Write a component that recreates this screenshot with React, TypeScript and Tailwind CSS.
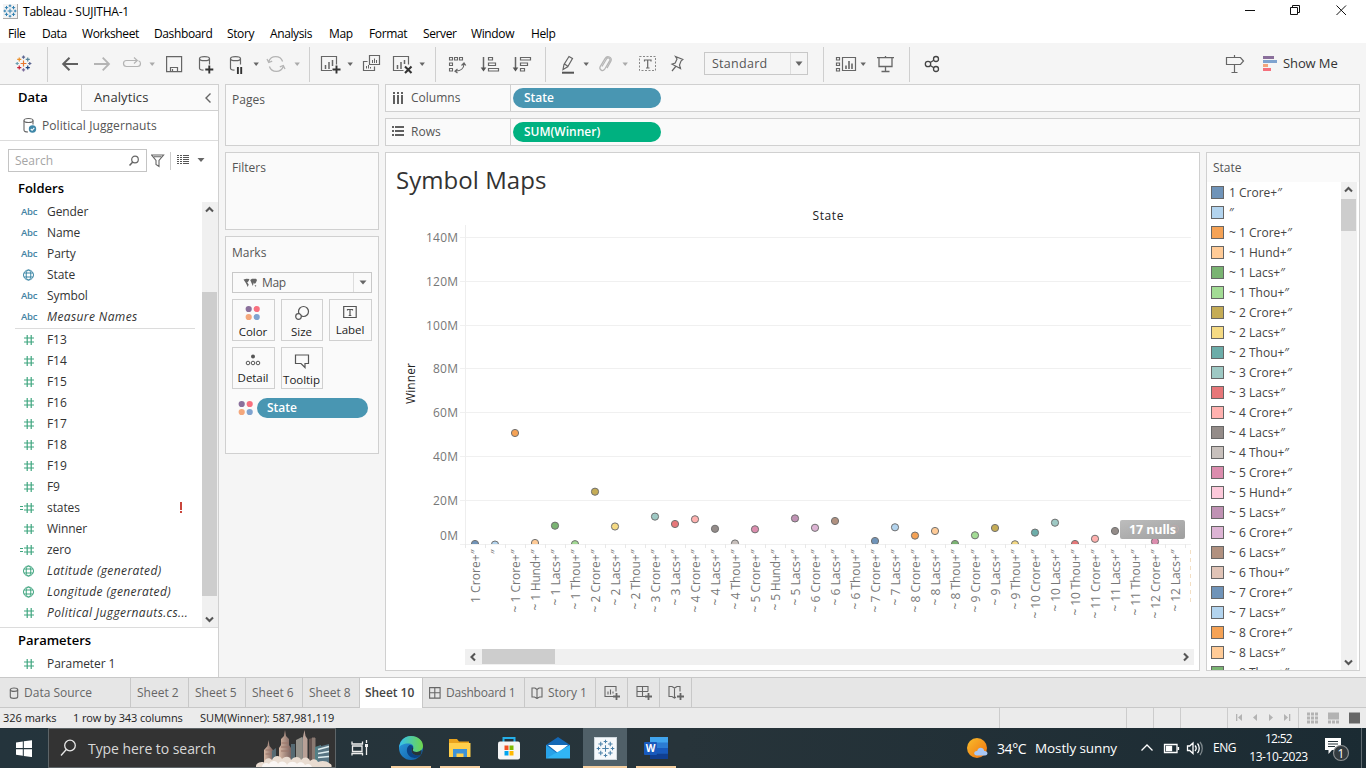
import type { ReactNode } from 'react';

const UI = "font-['Open_Sans','Noto_Sans',sans-serif]";

type IconProps = { x: number; y: number; w?: number; h?: number; className?: string; stroke?: string; sw?: number; children: ReactNode };

function Ic({ x, y, w = 24, h = 24, className = '', stroke = '#666', sw = 1.2, children }: IconProps) {
  return (
    <svg className={`block shrink-0 ${className}`} width={w} height={h} viewBox={`${x} ${y} ${w} ${h}`} fill="none" stroke={stroke} strokeWidth={sw}>
      {children}
    </svg>
  );
}

function Caret({ className = '', fill = '#666' }: { className?: string; fill?: string }) {
  return (
    <svg className={`block shrink-0 ${className}`} width="8" height="24" viewBox="0 0 8 24">
      <path d="M1.500 10.500h5.400l-2.700 3.400z" fill={fill} />
    </svg>
  );
}

function Div({ className = '' }: { className?: string }) {
  return <div className={`-mt-[5px] h-[35px] w-px shrink-0 bg-[#cfcfcf] ${className}`} />;
}

function TableauMark({ size, color, thin }: { size: number; color?: string; thin?: boolean }) {
  const marks: [number, number, number, string][] = [
    [12, 12, 3.4, '#e8762d'],
    [12, 4.6, 1.9, '#5b6591'],
    [12, 19.4, 1.9, '#7b6b9b'],
    [4.6, 12, 1.9, '#6a9fb0'],
    [19.4, 12, 1.9, '#5b6591'],
    [7, 7.2, 2.4, '#eb912c'],
    [17, 7.2, 2.4, '#59879b'],
    [7, 16.8, 2.4, '#c72035'],
    [17, 16.8, 2.4, '#1f447e'],
  ];
  return (
    <svg className="block shrink-0" width={size} height={size} viewBox="2 2 20 20" fill="none" strokeWidth={thin ? 1.1 : 1.4}>
      {marks.map(([x, y, r, c], i) => (
        <path key={i} d={`M${x - r} ${y}h${2 * r}M${x} ${y - r}v${2 * r}`} stroke={color ?? c} />
      ))}
    </svg>
  );
}

function TitleBar() {
  return (
    <div className="flex h-[22px] shrink-0 items-start">
      <div className="ml-[3px] mt-[4px] flex h-[15px] w-[15px] items-center justify-center border-b border-r border-[#aaa] bg-[#f3f3f3]">
        <TableauMark size={14} color="#2f7fb0" />
      </div>
      <div className="ml-[5px] mt-[3px] text-[12px] leading-[18px] tracking-[-0.22px] text-black">Tableau - SUJITHA-1</div>
      <Ic x={1240} y={0} w={116} h={22} stroke="#111" sw={1} className="ml-auto mr-[10px]">
        <path d="M1245 10.500h10" />
        <path d="M1290.500 7.500h7v7h-7zM1292.500 7.500v-2h7v7h-2" />
        <path d="M1336.500 5.500l9.500 9.500M1346 5.500l-9.500 9.500" />
      </Ic>
    </div>
  );
}

function MenuBar() {
  const items: [string, string][] = [
    ['File', 'w-[34px]'],
    ['Data', 'w-[40px]'],
    ['Worksheet', 'w-[72px]'],
    ['Dashboard', 'w-[73px]'],
    ['Story', 'w-[43px]'],
    ['Analysis', 'w-[59px]'],
    ['Map', 'w-[40px]'],
    ['Format', 'w-[54px]'],
    ['Server', 'w-[48px]'],
    ['Window', 'w-[60px]'],
    ['Help', 'w-[40px]'],
  ];
  return (
    <div className="flex h-[21px] shrink-0 pl-[8px] text-[12px] leading-[24px] tracking-[-0.38px] text-black">
      {items.map(([t, w]) => (
        <div key={t} className={`${w} shrink-0 whitespace-nowrap`}>{t}</div>
      ))}
    </div>
  );
}

function Toolbar() {
  return (
    <div className="flex h-[41px] shrink-0 items-start bg-[#f5f5f5] pt-[9px]">
      <div className="ml-[15px] mt-[3px]"><TableauMark size={17} /></div>
      <Div className="ml-[15px]" />
      <Ic x={58} y={52} className="ml-[10px]" sw={2} stroke="#606060"><path d="M78 64H63.500M69.500 57.700L63.200 64l6.300 6.300" /></Ic>
      <Ic x={90} y={52} className="ml-[8px]" sw={1.8} stroke="#b4b4b4"><path d="M94 64h14.500M102.700 57.700L109 64l-6.300 6.300" /></Ic>
      <Ic x={120} y={52} className="ml-[6px]" stroke="#b4b4b4"><path d="M130.500 60.500h-4a3 3 0 0 0-3 3a3 3 0 0 0 3 3h11a3 3 0 0 0 3-3c0-1.400-.800-2.400-2-2.800M130.500 60.500h6M134 57.500l3.300 3l-3.300 3" /></Ic>
      <Caret className="ml-[4px]" fill="#aaa" />
      <Ic x={162} y={52} className="ml-[6px]"><path d="M166.600 56.600h15v15h-15zM170.500 71.500v-4h7v4M172.500 69v2.500" /></Ic>
      <Ic x={194} y={52} className="ml-[8px]">
        <ellipse cx="204.500" cy="58.700" rx="5" ry="2" /><path d="M199.500 58.700v9.500c0 1 1.500 1.800 4 2M209.500 58.700v5.800" />
        <path d="M209.300 65.500v8M205.300 69.500h8" stroke="#333" strokeWidth="1.900" />
      </Ic>
      <Ic x={225} y={52} className="ml-[7px]">
        <ellipse cx="235.500" cy="58.700" rx="5" ry="2" /><path d="M230.500 58.700v9.500c0 1 1.500 1.800 4 2M240.500 58.700v5.800" />
        <path d="M237.900 67v7M241.200 67v7" stroke="#333" strokeWidth="1.900" />
      </Ic>
      <Caret className="ml-[3px]" />
      <Ic x={264} y={52} className="ml-[4px]" stroke="#b4b4b4" sw={1.3}>
        <path d="M268.800 61.500a7.300 7.300 0 0 1 13.800 0M283.200 66.500a7.300 7.300 0 0 1-13.800 0M267 59l1.700 3.500l3.500-1.300M285 69l-1.700-3.500l-3.500 1.300" />
      </Ic>
      <Caret className="ml-[5px]" fill="#aaa" />
      <Div className="ml-[8px]" />
      <Ic x={318} y={52} className="ml-[8px]">
        <path d="M332 70.500h-10.500v-14h15v8" /><path d="M325.500 65v4M329 62v7M332.500 60v6" strokeWidth="1.500" />
        <path d="M336.500 65.500v8M332.500 69.500h8" stroke="#333" strokeWidth="1.900" />
      </Ic>
      <Caret className="ml-[4px]" />
      <Ic x={360} y={52} className="ml-[6px]">
        <path d="M369.500 55.500h10v9h-10zM367.500 61.500h-4v9h11v-4" /><path d="M372.500 60v3M374.500 58.500v4.500M376.500 60v3M366.500 66v2.500M368.500 65v3.500M370.500 67v1.500" strokeWidth="1" />
      </Ic>
      <Ic x={391} y={52} className="ml-[7px]">
        <path d="M403.500 70.500h-10v-14h15v8" /><path d="M397.500 65v4M401 62v7M404.500 60v4" strokeWidth="1.500" />
        <path d="M405 66.500l6.500 6.500M411.500 66.500L405 73" stroke="#333" strokeWidth="2.100" />
      </Ic>
      <Caret className="ml-[3px]" />
      <Div className="ml-[9px]" />
      <Ic x={445} y={52} className="ml-[9px]">
        <path d="M449.500 57.500h3v2.500h-3zM454.500 57.500h3v2.500h-3zM459.500 57.500h3v2.500h-3zM449.500 63h3v2.500h-3zM449.500 68.500h3v2.500h-3z" strokeWidth="1.100" />
        <path d="M464 63.500c0 5-3.500 7.500-8 7.500M461.500 65.500l2.500-2.500l1.800 2.500M457.500 69l-2.500 2.200l2.500 1.800" />
      </Ic>
      <Ic x={478} y={52} className="ml-[9px]">
        <path d="M483.500 57v12" strokeWidth="1.500" /><path d="M480.700 67.500h5.600l-2.800 4z" fill="#555" stroke="none" />
        <path d="M488.500 57.500h4v2.500h-4zM488.500 63h7v2.500h-7zM488.500 68.500h10v2.500h-10z" />
      </Ic>
      <Ic x={510} y={52} className="ml-[8px]">
        <path d="M515.500 57v12" strokeWidth="1.500" /><path d="M512.700 67.500h5.600l-2.800 4z" fill="#555" stroke="none" />
        <path d="M520.500 57.500h10v2.500h-10zM520.500 63h7v2.500h-7zM520.500 68.500h4v2.500h-4z" />
      </Ic>
      <Div className="ml-[11px]" />
      <Ic x={556} y={52} className="ml-[10px]">
        <path d="M563 69.500l1-5l5-8l3.500 2l-4.800 8.200zM564.500 64l3.300 2.200" /><path d="M562 72.700h12" stroke="#555" strokeWidth="2" />
      </Ic>
      <Caret className="ml-[2px]" />
      <Ic x={593} y={52} className="ml-[3px]" stroke="#b4b4b4">
        <path d="M602 66.500l4.500-7.500c1.300-2 4.300-.700 3.200 1.600l-5 8.600c-2 2.800-6 .500-4.500-2.600l4.800-8c2.200-3.500 7.600-1.500 6 2.500l-4 7" />
      </Ic>
      <Caret className="ml-[4px]" fill="#aaa" />
      <Ic x={636} y={52} className="ml-[7px]">
        <path d="M639.500 56.500h16v14h-16z" strokeDasharray="2 1.500" strokeWidth="1" stroke="#888" /><path d="M644.500 61.500v-1.500h6.500v1.500M647.700 60v8M646 68h3.500" />
      </Ic>
      <Ic x={665} y={52} className="ml-[5px]">
        <path d="M675.500 56.500l7.300 3l-1.800 1.500l-1.500 4l1 3.500l-8.500-4.300l3.200-1.200l1.800-4zM675.700 66.500l-3.700 4.500" />
      </Ic>
      <div className="ml-[15px] flex h-[23px] w-[104px] border border-[#c8c8c8] text-[12.5px] leading-[21px] tracking-[0.27px] text-[#555]">
        <div className="w-[86px] border-r border-[#ddd] pl-[7px]">Standard</div>
        <svg className="ml-[4px] mt-[8px] block" width="9" height="6" viewBox="0 0 9 6"><path d="M.500.500h7L4 5z" fill="#666" /></svg>
      </div>
      <Div className="ml-[15px]" />
      <Ic x={834} y={52} className="ml-[10px]">
        <path d="M836.500 57.500h3v2.500h-3zM836.500 63h3v2.500h-3zM836.500 68.500h3v2.500h-3zM842.500 57.500h13v13h-13z" /><path d="M846 65.500v3.500M849 61v8M852 63.500v5.500" strokeWidth="1.600" />
      </Ic>
      <Caret className="ml-[1px]" />
      <Ic x={873} y={52} className="ml-[6px]" sw={1.3}><path d="M877 57.600h17M879 58v8.500h13v-8.500M885.500 67v4.500M881.500 71.500h8M885.500 56v2" /></Ic>
      <Div className="ml-[12px]" />
      <Ic x={920} y={52} className="ml-[10px]" stroke="#444" sw={1.3}>
        <circle cx="928" cy="64" r="2.700" /><circle cx="936" cy="59" r="2.500" /><circle cx="936" cy="69" r="2.500" /><path d="M930.300 62.500l3.500-2.200M930.300 65.500l3.500 2.200" />
      </Ic>
      <Ic x={1223} y={52} className="ml-auto">
        <path d="M1226.500 57.500h14l3 3.500l-3 3.500h-14zM1234.500 55v2.500M1234.500 64.500v7.500M1231.500 72.500h6" />
      </Ic>
      <Ic x={1263} y={52} w={15} className="ml-[16px]" stroke="none">
        <path d="M1263 56h11v3h-11z" fill="#8a6f9b" /><path d="M1263 60h14v3h-14z" fill="#7fa3cf" /><path d="M1263 64h5v3h-5z" fill="#f2a57c" /><path d="M1263 68h8v3h-8z" fill="#f5707c" />
      </Ic>
      <div className="ml-[5px] w-[83px] whitespace-nowrap text-[13px] leading-[22px] tracking-[-0.1px] text-[#333]">Show Me</div>
    </div>
  );
}

function Arrow({ dir }: { dir: 'up' | 'down' | 'left' | 'right' }) {
  const d = {
    up: 'M4 9.500L7.500 6l3.500 3.500',
    down: 'M4 6.500L7.500 10l3.500-3.500',
    left: 'M10 4.500L6.500 8l3.500 3.500',
    right: 'M6 4.500L9.500 8l-3.500 3.500',
  }[dir];
  return <svg className="block shrink-0" width="16" height="16" viewBox="0 0 16 16"><path d={d} fill="none" stroke="#555" strokeWidth="2.100" /></svg>;
}

function Hash({ calc }: { calc?: boolean }) {
  return (
    <svg className="block shrink-0" width="18" height="12" viewBox="0 0 18 12" fill="none" stroke="#3fa57f" strokeWidth="1.200">
      <path d="M4 4h10M4 8h10M7.200 1v10M11.200 1v10" />
      {calc && <path d="M0 4.500h3M0 7.500h3" strokeWidth="1" />}
    </svg>
  );
}

function Globe({ color }: { color: string }) {
  return (
    <svg className="block shrink-0" width="18" height="12" viewBox="0 0 18 12" fill="none" stroke={color} strokeWidth="1">
      <circle cx="8.500" cy="6" r="5" /><ellipse cx="8.500" cy="6" rx="2.300" ry="5" /><path d="M4 4h9M4 8h9" />
    </svg>
  );
}

type Field = { t: string; k: 'abc' | 'hash' | 'calc' | 'gb' | 'gg'; i?: boolean; bad?: boolean };

function FieldRow({ f }: { f: Field }) {
  return (
    <div className="flex h-[21px] shrink-0 items-center pl-[20px]">
      <div className="w-[27px] shrink-0">
        {f.k === 'abc' && <div className="pl-px pt-px text-[9.5px] font-semibold leading-[12px] tracking-[-0.2px] text-[#4383a3]">Abc</div>}
        {f.k === 'hash' && <Hash />}
        {f.k === 'calc' && <Hash calc />}
        {f.k === 'gb' && <Globe color="#3d87a6" />}
        {f.k === 'gg' && <Globe color="#3fa57f" />}
      </div>
      <div className={`w-[142px] whitespace-nowrap pt-px text-[12px] leading-[20px] text-[#333] ${f.i ? 'italic tracking-[0.39px]' : 'tracking-[-0.08px]'}`}>{f.t}</div>
      {f.bad && <div className="-ml-[9px] flex flex-col gap-px"><div className="h-[8px] w-[2px] bg-[#c9453b]" /><div className="h-[2px] w-[2px] bg-[#c9453b]" /></div>}
    </div>
  );
}

const dims: Field[] = [
  { t: 'Gender', k: 'abc' }, { t: 'Name', k: 'abc' }, { t: 'Party', k: 'abc' }, { t: 'State', k: 'gb' }, { t: 'Symbol', k: 'abc' }, { t: 'Measure Names', k: 'abc', i: true },
];
const measures: Field[] = [
  { t: 'F13', k: 'hash' }, { t: 'F14', k: 'hash' }, { t: 'F15', k: 'hash' }, { t: 'F16', k: 'hash' }, { t: 'F17', k: 'hash' }, { t: 'F18', k: 'hash' }, { t: 'F19', k: 'hash' }, { t: 'F9', k: 'hash' },
  { t: 'states', k: 'calc', bad: true }, { t: 'Winner', k: 'hash' }, { t: 'zero', k: 'calc' }, { t: 'Latitude (generated)', k: 'gg', i: true }, { t: 'Longitude (generated)', k: 'gg', i: true }, { t: 'Political Juggernauts.cs...', k: 'hash', i: true },
];

function DataPane() {
  return (
    <div className="flex w-[219px] shrink-0 flex-col border-r border-t border-[#d0d0d0] bg-white">
      <div className="flex h-[26px] shrink-0">
        <div className="w-[81px] pl-[18px] text-[13px] font-semibold leading-[25px] text-black">Data</div>
        <div className="flex flex-1 items-center border-b border-l border-[#d0d0d0] bg-[#fafafa] pl-[12px]">
          <div className="text-[13px] leading-[25px] tracking-[0.1px] text-[#333]">Analytics</div>
          <Ic x={0} y={0} w={10} h={12} className="ml-auto mr-[5px]" sw={1.4}><path d="M7.500 1.500L3 6l4.500 4.500" /></Ic>
        </div>
      </div>
      <div className="flex h-[30px] shrink-0 items-center border-b border-[#dcdcdc] pl-[22px]">
        <Ic x={22} y={117} w={16} h={17} sw={1.1}>
          <ellipse cx="28.500" cy="120.500" rx="4.500" ry="2" /><path d="M24 120.500v9.500c0 1.300 1.800 2 4 2M33 120.500v4" />
          <circle cx="32.500" cy="129" r="3.700" fill="#3f87a8" stroke="none" /><path d="M30.800 129l1.300 1.300l2.200-2.500" stroke="#fff" />
        </Ic>
        <div className="ml-[4px] whitespace-nowrap text-[12px] leading-[20px] tracking-[0.08px] text-[#555]">Political Juggernauts</div>
      </div>
      <div className="mt-[8px] flex h-[23px] shrink-0 items-center pl-[8px]">
        <div className="flex h-[23px] w-[139px] items-center border border-[#c4c4c4] pl-[6px] text-[12px] text-[#a5a5a5]">
          Search
          <Ic x={0} y={0} w={12} h={12} className="ml-auto mr-[6px]" sw={1.2}><circle cx="7" cy="4.500" r="3.300" /><path d="M4.800 7L1.500 10.500" strokeWidth="1.500" /></Ic>
        </div>
        <Ic x={0} y={0} w={14} h={14} className="ml-[4px]" sw={1.1}><path d="M.600 1h12L8 6.500v6l-3-2v-4zM2.800 2.800h7.500" /></Ic>
        <div className="ml-[5px] h-[18px] w-px bg-[#ccc]" />
        <Ic x={0} y={0} w={13} h={12} className="-mt-[3px] ml-[6px]" sw={1} stroke="#555"><path d="M0 2.500h12M0 4.500h12M0 6.500h12M0 8.500h12M0 10.500h12" strokeDasharray="2 1 2 1 6 0" /></Ic>
        <Ic x={0} y={0} w={8} h={6} className="-mt-[2px] ml-[7px]" stroke="none"><path d="M.500 1h7L4 5z" fill="#666" /></Ic>
      </div>
      <div className="h-[29px] shrink-0 pl-[18px] text-[13px] font-semibold leading-[32px] text-black">Folders</div>
      <div className="flex h-[427px] shrink-0 border-b border-[#dcdcdc]">
        <div className="flex w-[202px] flex-col overflow-hidden">
          {dims.map((f) => <FieldRow key={f.t} f={f} />)}
          <div className="ml-[15px] mt-px h-px w-[180px] shrink-0 bg-[#dcdcdc]" />
          {measures.map((f) => <FieldRow key={f.t} f={f} />)}
        </div>
        <div className="mt-px flex w-[16px] flex-col bg-[#f0f0f0]">
          <Arrow dir="up" />
          <div className="mt-[74px] h-[304px] w-[15px] bg-[#cdcdcd]" />
          <div className="mt-auto"><Arrow dir="down" /></div>
        </div>
      </div>
      <div className="h-[25px] shrink-0 pl-[18px] text-[13px] font-semibold leading-[25px] text-black">Parameters</div>
      <FieldRow f={{ t: 'Parameter 1', k: 'hash' }} />
    </div>
  );
}

function Dots() {
  return (
    <svg className="block shrink-0" width="16" height="16" viewBox="0 0 16 16">
      <circle cx="3.700" cy="4" r="3.100" fill="#8a6f9b" /><circle cx="11.700" cy="4" r="3.100" fill="#f8707f" /><circle cx="3.700" cy="12" r="3.100" fill="#f4a77c" /><circle cx="11.700" cy="12" r="3.100" fill="#7fa3cf" />
    </svg>
  );
}

function MarkButton({ label, w, children }: { label: string; w: string; children: ReactNode }) {
  return (
    <div className={`${w} flex h-[42px] flex-col items-center border border-[#d0d0d0]`}>
      <div className="mt-[5px] flex h-[17px] items-center pr-px">{children}</div>
      <div className="whitespace-nowrap pr-px text-[11.5px] leading-[21px] tracking-[-0.05px] text-[#222]">{label}</div>
    </div>
  );
}

function Cards() {
  const card = 'border border-[#d0d0d0] bg-[#fafafa] text-[12px] text-[#555]';
  return (
    <div className="ml-[6px] flex w-[154px] shrink-0 flex-col">
      <div className={`${card} h-[62px] shrink-0 pl-[6px] leading-[30px]`}>Pages</div>
      <div className={`${card} mt-[6px] h-[78px] shrink-0 pl-[6px] leading-[30px]`}>Filters</div>
      <div className={`${card} mt-[6px] flex h-[218px] shrink-0 flex-col pl-[6px]`}>
        <div className="h-[35px] leading-[31px]">Marks</div>
        <div className="flex h-[21px] w-[140px] items-center border border-[#c8c8c8]">
          <Ic x={0} y={0} w={14} h={10} className="ml-[10px]" stroke="none">
            <path d="M.500 1.500l3-.700l3 .200l-1 2.200l-1.300 1.200l1.500 2l-1 2.600l-1.200-2.700l-1-1.800zM7.200 2l1.800-1.200h4l1 1.200l-1 2.500l-1.200 1.500l-1-1.500l-1 3.500l-1.300-3zM11.500 7l1.800.500l-.500 1.500z" fill="#666" />
          </Ic>
          <div className="ml-[5px] leading-[19px] tracking-[-0.3px]">Map</div>
          <div className="ml-auto flex h-[19px] w-[18px] items-center justify-center border-l border-[#ddd]">
            <svg width="8" height="5" viewBox="0 0 8 5"><path d="M.500.500h7L4 4.500z" fill="#666" /></svg>
          </div>
        </div>
        <div className="mt-[6px] flex gap-[6px]">
          <MarkButton label="Color" w="w-[43px]"><Dots /></MarkButton>
          <MarkButton label="Size" w="w-[42px]">
            <Ic x={0} y={0} w={16} h={16} stroke="#555"><circle cx="9.500" cy="6.500" r="5" /><circle cx="4.500" cy="11.500" r="2.800" fill="#fafafa" /></Ic>
          </MarkButton>
          <MarkButton label="Label" w="w-[43px]">
            <Ic x={0} y={0} w={14} h={14} stroke="#555"><path d="M.700 1.500h12.500v11H.700zM4.500 5.500V4.500h5v1M7 4.500v6M5.700 10.500h2.600" /></Ic>
          </MarkButton>
        </div>
        <div className="mt-[6px] flex gap-[6px]">
          <MarkButton label="Detail" w="w-[43px]">
            <Ic x={0} y={0} w={16} h={14} stroke="#555" sw={1}><circle cx="8" cy="3.500" r="2" fill="#555" stroke="none" /><circle cx="3" cy="10" r="1.800" /><circle cx="8" cy="10" r="1.800" /><circle cx="13" cy="10" r="1.800" /></Ic>
          </MarkButton>
          <MarkButton label="Tooltip" w="w-[42px]">
            <Ic x={0} y={0} w={16} h={16} stroke="#555"><path d="M1.500 2h13v8.500h-3.500v4l-4-4h-5.500z" /></Ic>
          </MarkButton>
        </div>
        <div className="mt-[9px] flex items-center pl-[6px]">
          <Dots />
          <div className="ml-[3px] h-[20px] w-[111px] rounded-full bg-[#4996b2] pl-[10px] text-[12px] font-semibold leading-[20px] text-white">State</div>
        </div>
      </div>
    </div>
  );
}

function Shelf({ label, pill, color, cols }: { label: string; pill: string; color: string; cols?: boolean }) {
  return (
    <div className="flex h-[28px] shrink-0 items-center border border-[#d0d0d0] bg-[#fafafa]">
      <div className="flex h-[26px] w-[125px] items-center border-r border-[#d0d0d0] pl-[6px]">
        <svg width="13" height="12" viewBox="0 0 13 12" fill="#606060">
          {cols
            ? <path d="M1 0h2v2H1zM5 0h2v2H5zM9 0h2v2H9zM1 3h2v9H1zM5 3h2v9H5zM9 3h2v9H9z" />
            : <path d="M0 0h2v2H0zM0 4h2v2H0zM0 8h2v2H0zM3 0H12v2H3zM3 4H12v2H3zM3 8H12v2H3z" />}
        </svg>
        <div className="ml-[6px] text-[12px] leading-[20px] text-[#555]">{label}</div>
      </div>
      <div className={`${color} ml-[2px] h-[20px] w-[148px] rounded-full pl-[11px] text-[12px] font-semibold leading-[20px] text-white`}>{pill}</div>
    </div>
  );
}

const palette = ['#7094b9', '#b3d4ee', '#f5a255', '#ffcb97', '#7ab472', '#a3dc95', '#c5ac56', '#f5da83', '#6cada9', '#9ec9c4', '#e77779', '#ffb1af', '#948c89', '#c8c0bc', '#dc8dae', '#fcc9da', '#c092b4', '#ddb4d4', '#b19180', '#e0c3b6'];

const points: [string, number | null][] = [
  ['1 Crore+″', 544], ['″', 544.6], ['~ 1 Crore+″', 433], ['~ 1 Hund+″', 543], ['~ 1 Lacs+″', 525.7], ['~ 1 Thou+″', 544.2], ['~ 2 Crore+″', 491.7], ['~ 2 Lacs+″', 526.5], ['~ 2 Thou+″', null],
  ['~ 3 Crore+″', 516.6], ['~ 3 Lacs+″', 524], ['~ 4 Crore+″', 519.3], ['~ 4 Lacs+″', 528.8], ['~ 4 Thou+″', 543.5], ['~ 5 Crore+″', 529.3], ['~ 5 Hund+″', null], ['~ 5 Lacs+″', 518.4],
  ['~ 6 Crore+″', 527.8], ['~ 6 Lacs+″', 521], ['~ 6 Thou+″', null], ['~ 7 Crore+″', 541], ['~ 7 Lacs+″', 527.3], ['~ 8 Crore+″', 535.6], ['~ 8 Lacs+″', 531], ['~ 8 Thou+″', 544],
  ['~ 9 Crore+″', 535.3], ['~ 9 Lacs+″', 528], ['~ 9 Thou+″', 544.3], ['~ 10 Crore+″', 532.6], ['~ 10 Lacs+″', 522.7], ['~ 10 Thou+″', 544], ['~ 11 Crore+″', 538.8], ['~ 11 Lacs+″', 531],
  ['~ 11 Thou+″', null], ['~ 12 Crore+″', 541.6], ['~ 12 Lacs+″', 529],
];

function labelLength(t: string) {
  if (t === '″') return 5;
  const base = t.includes('Crore') ? 63 : t.includes('Hund') ? 61 : t.includes('Lacs') ? 56 : 60;
  return base + (t.length - (t.includes('Crore') ? 11 : 10)) * 6 + (t.startsWith('1') ? 2.5 : 0);
}

function Chart() {
  const ticks = ['140M', '120M', '100M', '80M', '60M', '40M', '20M', '0M'];
  const ys = [237, 281, 325, 368, 412, 456, 500, 544];
  return (
    <svg className="block shrink-0" width="813" height="446" viewBox="386 203 813 446" fontFamily="'Open Sans','Noto Sans',sans-serif">
      <text x="812.500" y="220" fontSize="12" fill="#222" textLength="31">State</text>
      <text transform="translate(415 404) rotate(-90)" fontSize="12" fill="#222" textLength="41">Winner</text>
      {ys.map((y, i) => (
        <g key={y}>
          <rect x="460" y={y} width="731" height="1" fill="#f0f0f0" />
          <text x="458" y={i === 7 ? 540 : y + 5} fontSize="12" fill="#777" textAnchor="end" textLength={i < 3 ? 32 : i === 7 ? 18 : 25}>{ticks[i]}</text>
        </g>
      ))}
      <rect x="465" y="225" width="1" height="320" fill="#eee" />
      {Array.from({ length: 37 }, (_, i) => <rect key={i} x={465 + 20 * i} y="544" width="1" height="4" fill="#e8e8e8" />)}
      <clipPath id="plot"><rect x="465" y="220" width="726" height="324" /></clipPath>
      <g clipPath="url(#plot)">
        {points.map(([t, y], i) => y !== null && <circle key={t} cx={475 + 20 * i} cy={y} r="3.600" fill={palette[i % 20]} stroke="#707070" strokeWidth="1" />)}
      </g>
      {points.map(([t], i) => (
        <text key={t} transform={`translate(${479.500 + 20 * i} ${549.500}) rotate(-90)`} textAnchor="end" fontSize="12" fill="#777" textLength={labelLength(t)}>{t}</text>
      ))}
      <path d="M1190.500 550v56" stroke="#f3dfc4" strokeDasharray="4 4" />
      <linearGradient id="nulls" x1="0" y1="0" x2="1" y2="1"><stop offset="0" stopColor="#bdbdbd" /><stop offset="1" stopColor="#9e9e9e" /></linearGradient>
      <rect x="1120" y="520" width="65" height="19" rx="2" fill="url(#nulls)" />
      <circle cx="1175" cy="529" r="3.600" fill="none" stroke="#bda9aa" />
      <text x="1129" y="534" fontSize="12.500" fontWeight="700" fill="#fff" textLength="47">17 nulls</text>
    </svg>
  );
}

function Legend() {
  const rows = [...points.slice(0, 15).map((p) => p[0]), '~ 5 Hund+″', '~ 5 Lacs+″', '~ 6 Crore+″', '~ 6 Lacs+″', '~ 6 Thou+″', '~ 7 Crore+″', '~ 7 Lacs+″', '~ 8 Crore+″', '~ 8 Lacs+″', '~ 8 Thou+″'];
  return (
    <div className="ml-[6px] flex h-[519px] w-[154px] flex-col border border-[#d0d0d0] bg-white">
      <div className="h-[29px] shrink-0 bg-[#fafafa] pl-[6px] text-[12px] leading-[30px] text-[#555]">State</div>
      <div className="flex h-[488px] overflow-hidden">
        <div className="w-[134px] overflow-hidden pl-[4px]">
          {rows.map((t, i) => (
            <div key={t} className="flex h-[20px] items-center">
              <svg className="block" width="13" height="13"><rect x=".5" y=".5" width="12" height="12" fill={palette[i % 20]} stroke="#666" /></svg>
              <div className="ml-[5px] whitespace-nowrap pt-[2px] text-[12px] leading-[20px] text-[#444]">{t}</div>
            </div>
          ))}
        </div>
        <div className="flex h-[488px] w-[16px] flex-col bg-[#f0f0f0]">
          <Arrow dir="up" />
          <div className="mt-px h-[32px] w-[15px] bg-[#cdcdcd]" />
          <div className="mt-auto"><Arrow dir="down" /></div>
        </div>
      </div>
    </div>
  );
}

function Workspace() {
  return (
    <div className="ml-[6px] flex w-[975px] shrink-0 flex-col">
      <Shelf label="Columns" pill="State" color="bg-[#4996b2]" cols />
      <div className="h-[6px] shrink-0" />
      <Shelf label="Rows" pill="SUM(Winner)" color="bg-[#00b180]" />
      <div className="mt-[6px] flex">
        <div className="flex h-[519px] w-[815px] shrink-0 flex-col border border-[#d0d0d0] bg-white">
          <div className="h-[50px] shrink-0 pl-[10px] text-[24px] leading-[54px] tracking-[0.05px] text-[#333]">Symbol Maps</div>
          <Chart />
          <div className="ml-[79px] flex h-[16px] w-[729px] bg-[#f0f0f0]">
            <Arrow dir="left" />
            <div className="ml-px h-[15px] w-[73px] bg-[#cdcdcd]" />
            <div className="ml-auto"><Arrow dir="right" /></div>
          </div>
        </div>
        <Legend />
      </div>
    </div>
  );
}

function Tab({ w, active, children }: { w: string; active?: boolean; children: ReactNode }) {
  return (
    <div className={`${w} flex h-[30px] shrink-0 items-center whitespace-nowrap border-r border-[#c8c8c8] text-[12px] ${active ? 'bg-white pb-px pl-[5px] font-semibold tracking-[-0.05px] text-[#444]' : 'pl-[6px] text-[#666]'}`}>
      {children}
    </div>
  );
}

function SheetTabs() {
  return (
    <div className="flex h-[31px] shrink-0 border-b border-t border-[#c8c8c8] bg-[#e6e6e6]">
      <Tab w="w-[131px]">
        <Ic x={0} y={0} w={10} h={12} className="ml-[3px] mr-[5px]" sw={1.1}><ellipse cx="5" cy="2.700" rx="3.700" ry="1.700" /><path d="M1.300 2.700v7c0 2.200 7.400 2.200 7.400 0v-7" /></Ic>
        Data Source
      </Tab>
      <Tab w="w-[58px]">Sheet 2</Tab>
      <Tab w="w-[57px]">Sheet 5</Tab>
      <Tab w="w-[57px]">Sheet 6</Tab>
      <Tab w="w-[57px]">Sheet 8</Tab>
      <Tab w="w-[63px]" active>Sheet 10</Tab>
      <Tab w="w-[102px]">
        <Ic x={0} y={0} w={12} h={12} className="mr-[5px]" sw={1.1}><path d="M.600.600h10.500v10.500H.600zM5.800.600v10.500M.600 5.800h10.500" /></Ic>
        <span className="tracking-[-0.22px]">Dashboard 1</span>
      </Tab>
      <Tab w="w-[71px]">
        <Ic x={0} y={0} w={12} h={12} className="mr-[5px]" sw={1.1}><path d="M1 1h3l2 1.500L8 1h3v9H8.500L6 11.500L3.500 10H1zM6 2.500v9" /></Ic>
        Story 1
      </Tab>
      <Tab w="w-[32px]">
        <Ic x={0} y={0} w={18} h={16} className="ml-[2px]" sw={1.1}><path d="M9 11.500H1v-10h11v5M4 6.500v3M6.500 4.500v5M9 6.500v2" /><path d="M12.500 8v7M9 11.500h7" strokeWidth="1.800" /></Ic>
      </Tab>
      <Tab w="w-[32px]">
        <Ic x={0} y={0} w={18} h={16} className="ml-[2px]" sw={1.1}><path d="M9 11.500H1v-10h11v5M6.500 1.500v10M1 6.500h11" /><path d="M12.500 8v7M9 11.500h7" strokeWidth="1.800" /></Ic>
      </Tab>
      <Tab w="w-[32px]">
        <Ic x={0} y={0} w={18} h={16} className="ml-[2px]" sw={1.1}><path d="M8 12L6.500 13L4 11.500H1v-10h3l2.500 1.500L9 1.500h3v5M6.500 3v10" /><path d="M12.500 8v7M9 11.500h7" strokeWidth="1.800" /></Ic>
      </Tab>
    </div>
  );
}

function StatusBar() {
  const sep = 'border-l border-[#ccc] h-[20px]';
  return (
    <div className="flex h-[20px] shrink-0 bg-[#ebebeb] text-[11px] leading-[20px] tracking-[-0.12px] text-[#222]">
      <div className="ml-[3px] w-[70px] whitespace-nowrap tracking-[-0.02px]">326 marks</div>
      <div className="w-[127px] whitespace-nowrap">1 row by 343 columns</div>
      <div className="whitespace-nowrap tracking-[-0.06px]">SUM(Winner): 587,981,119</div>
      <div className={`${sep} ml-auto w-[127px]`} />
      <div className={`${sep} w-[27px]`} />
      <div className={`${sep} w-[27px]`} />
      <div className={`${sep} w-[47px]`} />
      <div className={`${sep} flex w-[71px] items-center`}>
        <svg width="70" height="20" viewBox="0 0 70 20" fill="#b3b3b3"><path d="M8 6h1.300v7H8zM14 6v7l-4-3.500zM29 6v7l-4-3.500zM41 6v7l4-3.500zM56 6v7l4-3.500zM61 6h1.300v7H61z" /></svg>
      </div>
      <div className={`${sep} w-[68px]`}>
        <svg width="67" height="20" viewBox="0 0 67 20" fill="#b3b3b3">
          <path d="M8 4.500h3v3H8zM12 4.500h3v3h-3zM16 4.500h3v3h-3zM8 8.500h3v3H8zM12 8.500h3v3h-3zM16 8.500h3v3h-3zM8 12.500h3v3H8zM12 12.500h3v3h-3zM16 12.500h3v3h-3zM29 4.500h11v7H29zM29 12.500h3v3h-3zM33 12.500h3v3h-3zM37 12.500h3v3h-3z" />
          <path d="M50 4.500h11v11H50z" fill="#666" />
        </svg>
      </div>
    </div>
  );
}

function Skyline() {
  return (
    <svg className="block shrink-0" width="80" height="38" viewBox="257 730 80 38">
      <defs><linearGradient id="bld" x1="0" x2="1" y1="0" y2="0"><stop offset="0" stopColor="#d8b8a4" /><stop offset="1" stopColor="#7c6460" /></linearGradient></defs>
      <path d="M270.500 741l1 6 3.500 4v14h-9v-14l3.500-4z" fill="url(#bld)" />
      <path d="M287 731l1 6 3 3v6l2 3v18h-12v-18l2-3v-6l3-3z" fill="url(#bld)" />
      <path d="M274 752l4-3v16h-4zM293 745h4v18h-4z" fill="#566a73" />
      <path d="M298 741l6-3v26h-6z" fill="#95928b" /><path d="M304 738l3 2v24h-3z" fill="#536b70" />
      <path d="M306.500 731l1 6 2 3v26h-5v-26z" fill="#b9a197" />
      <path d="M311 740l6-2v28h-6z" fill="#64534f" /><path d="M314 738.500l3.500.500v28H314z" fill="#8a7a72" />
      <path d="M317 748l6-2v18h-6z" fill="#527f85" />
      <path d="M320 748l11-3v21h-11z" fill="#587583" /><path d="M320 750.500l11-3M320 754.500l11-2M320 758.500l11-1" stroke="#dfeef0" strokeWidth="1.300" />
      <path d="M283.500 744h7M283 748h8M283 752h8M267.500 751h6M267.500 755h6" stroke="#9a7469" strokeWidth="1" />
      <path d="M258 768c-.500-4 5-6 8-4.500c1-5 6-5 8-2.500c2-5 8-5 10-1c3-3 8-3 9 1c3-4 9-4 10 0c3-4 8-3 9 1c3-3 7-2 8 1c4-2 9-1 11 1c2 1 3 2 2.500 4z" fill="#e9dcd1" />
      <path d="M264 768c0-4 5-5 7-3c2-4 8-4 9 0c2-4 8-3 9 1c2-4 8-4 10-1c2-3 7-2 8 1c3-2 6-1 7 2z" fill="#fff" opacity=".75" />
    </svg>
  );
}

function TaskItem({ w, on, sel, children }: { w: string; on?: boolean; sel?: boolean; children: ReactNode }) {
  return (
    <div className={`${w} flex h-[40px] shrink-0 flex-col items-center ${sel ? 'bg-[#506068]' : ''}`}>
      <div className="flex h-[38px] items-center justify-center pt-[2px]">{children}</div>
      {on && <div className="h-[2px] w-full bg-[#f5cfa0]" />}
    </div>
  );
}

function Taskbar() {
  return (
    <div className="flex h-[40px] shrink-0 items-center bg-linear-to-r from-[#24343c] via-[#27343a] to-[#1b2b33] text-white">
      <Ic x={16} y={740} w={16} h={17} className="ml-[16px]" stroke="none">
        <path d="M16 742.500l6.800-1v6.600H16zM23.800 741.300l8.200-1.100v7.900h-8.200zM16 749.200h6.800v6.600l-6.800-1zM23.800 749.200H32v7.900l-8.200-1.100z" fill="#fff" />
      </Ic>
      <div className="ml-[16px] flex h-[40px] w-[288px] items-center border border-[#5d6467] bg-[#333] text-[14px] text-[#d8d8d8]">
        <Ic x={0} y={0} w={17} h={18} className="ml-[11px]" stroke="#e8e8e8" sw={1.3}><circle cx="10" cy="6.500" r="5.300" /><path d="M6.300 10.500L1 16.500" /></Ic>
        <div className="ml-[11px] w-[169px] whitespace-nowrap tracking-[-0.06px]">Type here to search</div>
        <Skyline />
      </div>
      <Ic x={0} y={0} w={18} h={16} className="ml-[15px]" stroke="#eee" sw={1.3}>
        <path d="M1 1.500V4h10.500V1.500M1.500 6h9.500v5.500H1.500zM1 15.500V13.500h10.500v2M15.500 0v3M15.500 7v8" /><path d="M14 4h3v3h-3z" fill="#eee" stroke="none" />
      </Ic>
      <div className="ml-[22px] flex">
        <TaskItem w="w-[40px]" on>
          <svg width="26" height="26" viewBox="0 0 26 26">
            <defs>
              <linearGradient id="e1" x1="0" x2="1" y1="0" y2="1"><stop offset="0" stopColor="#2f9fe0" /><stop offset="1" stopColor="#0c59a4" /></linearGradient>
              <linearGradient id="e2" x1="0" x2="1"><stop offset="0" stopColor="#35c1f1" /><stop offset="1" stopColor="#6fd64a" /></linearGradient>
            </defs>
            <circle cx="13" cy="13" r="12" fill="url(#e1)" />
            <path d="M1 13C2 5 7 1 13 1c7 0 12 4.500 12 10c0 3.500-3 6-6.500 6c-3 0-4-1-3.500-2.500c1-2 .5-5.500-4-6C6 8.300 2 10 1 13z" fill="url(#e2)" />
            <path d="M11 10.500c-3 2.500-3 8 1 11c4 2.500 8 1.500 10.500-1.500c-5 1.500-9-1-9-4.500c0-2 1.500-2.500 1.500-3.500c0-1.500-2.500-2.500-4-1.500z" fill="#0b4386" />
            <path d="M15 14.500c-.5 1.500.500 2.500 3.500 2.500c2 0 3.500-.700 4.800-2c.500 2 0 3.500-.800 5c-5 1.500-9-1-9-4.500c0-2 1-2.500 1.400-3.400c.400.700.400 1.500.1 2.400z" fill="#27343a" />
          </svg>
        </TaskItem>
        <TaskItem w="ml-[9px] w-[40px]" on>
          <svg width="24" height="22" viewBox="0 0 24 22"><path d="M1 2h8l2 2.500h10V8H1z" fill="#e9a31d" /><path d="M1 6h21.500v14H1z" fill="#ffcf4b" /><path d="M5 12h14v8h-3.500v-3.500h-7V20H5z" fill="#3c92d8" /></svg>
        </TaskItem>
        <TaskItem w="ml-[9px] w-[40px]">
          <svg width="24" height="24" viewBox="0 0 24 24"><path d="M6.500 7V2h11v5" fill="none" stroke="#25b0ea" strokeWidth="2" /><rect x="1" y="5.500" width="22" height="18" rx="2" fill="#f5f5f5" /><path d="M7.500 9.500H11.500v4.500h-4z" fill="#f25022" /><path d="M12.500 9.500h4v4.500h-4z" fill="#7fba00" /><path d="M7.500 15h4v4.500h-4z" fill="#00a4ef" /><path d="M12.500 15h4v4.500h-4z" fill="#ffb900" /></svg>
        </TaskItem>
        <TaskItem w="ml-[9px] w-[40px]">
          <svg width="26" height="24" viewBox="0 0 26 24"><path d="M1 9L13 1l12 8v13H1z" fill="#1468b5" /><path d="M3 9h20l-10 8z" fill="#fff" /><path d="M1 9l12 9L1 22.500z" fill="#28a2e8" /><path d="M25 9L1 22.500h24z" fill="#31b5f5" /></svg>
        </TaskItem>
        <TaskItem w="ml-[5px] w-[44px]" on sel>
          <div className="flex h-[23px] w-[23px] items-center justify-center border border-[#cfd8dd] bg-[#f6f9fb]"><TableauMark size={19} color="#4a80a8" thin /></div>
        </TaskItem>
        <TaskItem w="ml-[9px] w-[40px]" on>
          <svg width="26" height="24" viewBox="0 0 26 24"><rect x="7" y="1" width="18" height="22" rx="1" fill="#2b7cd3" /><path d="M7 1h18v5.500H7z" fill="#41a5ee" /><path d="M7 12h18v5.500H7z" fill="#185abd" /><path d="M7 17.500h18V23H7z" fill="#103f91" /><rect x="1" y="6" width="13" height="13" rx="1" fill="#185abd" /><text x="7.500" y="16.200" fontSize="10" fontWeight="700" textAnchor="middle" fill="#fff" fontFamily="'Open Sans',sans-serif">W</text></svg>
        </TaskItem>
      </div>
      <Ic x={0} y={0} w={24} h={22} className="ml-auto" stroke="none">
        <defs><linearGradient id="sun" x1="0" x2="1" y1="0" y2="1"><stop offset="0" stopColor="#f8bd2c" /><stop offset="1" stopColor="#f0700f" /></linearGradient></defs>
        <circle cx="11" cy="11" r="10" fill="url(#sun)" /><path d="M11 18.500c-4 0-3.500-5 .2-4.500c1-4.500 6.500-4 7 0c4-.500 4.500 4.500.800 4.500z" fill="#a9c7f5" />
      </Ic>
      <div className="ml-[7px] w-[38px] whitespace-nowrap text-[14px] tracking-[-0.4px]">34°C</div>
      <div className="w-[106px] whitespace-nowrap text-[13.5px] tracking-[-0.1px]">Mostly sunny</div>
      <Ic x={1141} y={738} w={64} h={20} stroke="#fff" sw={1.3}>
        <path d="M1141.500 750.500l5.500-5.500l5.500 5.500" /><path d="M1164.500 744.500h12.500v8h-12.500zM1178.500 747v3" /><path d="M1166.500 746.500h5v4h-5z" fill="#fff" />
        <path d="M1187.500 746v4.500h2.200l3.300 3v-10.500l-3.300 3zM1195 745.500c1.300 1.500 1.300 4 0 5.500M1197.500 743.500c2.300 2.500 2.300 7 0 9.500" /><path d="M1200 742c3 3.500 3 9.500 0 13" stroke="#7d878b" />
      </Ic>
      <div className="ml-[8px] w-[36px] whitespace-nowrap text-[12px] tracking-[-0.5px]">ENG</div>
      <div className="flex w-[59px] flex-col items-center whitespace-nowrap text-[12px] leading-[18px]"><div className="tracking-[-0.7px]">12:52</div><div className="tracking-[-0.4px]">13-10-2023</div></div>
      <Ic x={1324} y={736} w={26} h={28} className="ml-[16px]" stroke="none">
        <path d="M1325 740h16v12h-9l-3.500 4v-4h-3.500z" fill="#fff" /><path d="M1328 743.500h10M1328 746h10M1328 748.500h7" stroke="#26343b" />
        <circle cx="1341" cy="755" r="7.500" fill="#333b3f" stroke="#8b8f91" /><text x="1341" y="759.500" fontSize="12" fill="#fff" textAnchor="middle" fontFamily="'Open Sans',sans-serif">1</text>
      </Ic>
      <div className="ml-[11px] mr-[4px] h-[40px] w-px bg-[#5f6a70]" />
    </div>
  );
}

export default function App() {
  return (
    <div className={`${UI} flex h-[768px] w-[1366px] flex-col overflow-hidden bg-white`}>
      <TitleBar />
      <MenuBar />
      <Toolbar />
      <div className="flex h-[593px] shrink-0 bg-[#f5f5f5]">
        <DataPane />
        <Cards />
        <Workspace />
      </div>
      <SheetTabs />
      <StatusBar />
      <Taskbar />
    </div>
  );
}
